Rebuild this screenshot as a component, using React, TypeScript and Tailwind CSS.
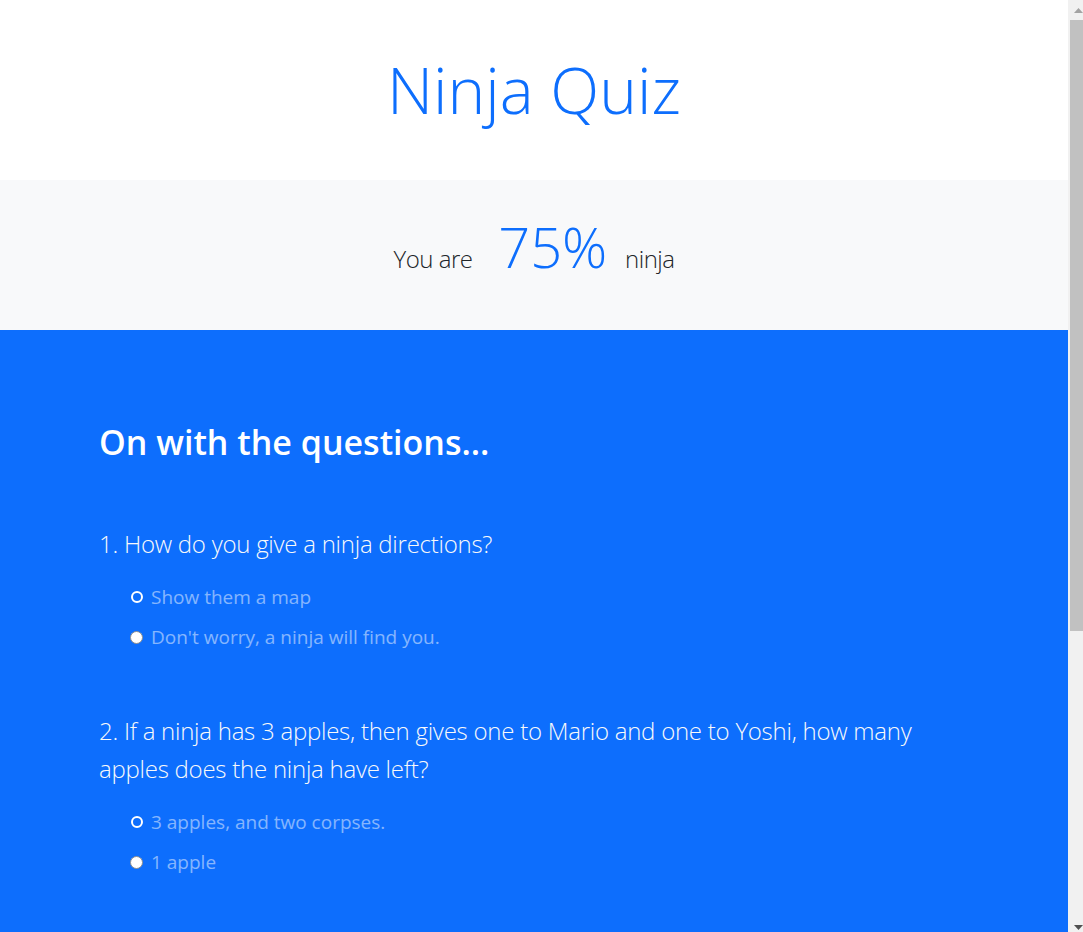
const questions = [
  {
    q: "1. How do you give a ninja directions?",
    a: ["Show them a map", "Don't worry, a ninja will find you."],
  },
  {
    q: "2. If a ninja has 3 apples, then gives one to Mario and one to Yoshi, how many apples does the ninja have left?",
    a: ["3 apples, and two corpses.", "1 apple"],
  },
];

function Radio({ checked }: { checked: boolean }) {
  if (checked) {
    return (
      <span className="w-[12px] h-[12px] mx-[0.5px] rounded-full border-2 border-white bg-[#0d6efd] shrink-0" />
    );
  }
  return (
    <span className="w-[13px] h-[13px] rounded-full border border-[#8f8f8f] bg-white shrink-0" />
  );
}

// fake window scrollbar, the page in the picture is scrolled to the top
function Scrollbar() {
  return (
    <aside className="w-[15px] shrink-0 bg-[#f1f1f1] flex flex-col">
      <div className="h-[20px] flex items-center justify-center pl-[5px]">
        <svg width="9" height="5" viewBox="0 0 9 5">
          <path d="M4.5 0 L9 5 L0 5 Z" fill="#a3a3a3" />
        </svg>
      </div>
      <div className="h-[611px] ml-[2px] bg-[#c1c1c1]" />
      <div className="flex-1 flex items-end justify-center pl-[5px] pb-[2px]">
        <svg width="9" height="5" viewBox="0 0 9 5">
          <path d="M0 0 L9 0 L4.5 5 Z" fill="#505050" />
        </svg>
      </div>
    </aside>
  );
}

export default function App() {
  return (
    <div className="h-[932px] overflow-hidden flex font-['Open_Sans',sans-serif] text-[19px]">
      <div className="flex-1 flex flex-col">
        <header className="bg-white h-[180px] shrink-0 flex items-center justify-center">
          <h1 className="text-[#0d6efd] text-[64px] font-light leading-[1.2]">
            Ninja Quiz
          </h1>
        </header>

        <section className="bg-[#f8f9fa] h-[150px] shrink-0 flex items-center justify-center text-[#212529]">
          <p className="text-[24px] font-light tracking-[-0.5px] mb-[16px]">
            You are{" "}
            <span className="text-[#0d6efd] text-[56px] leading-[1.2] pl-[20px] pr-[12px] tracking-normal">
              75%
            </span>{" "}
            ninja
          </p>
        </section>

        <main className="flex-1 bg-[#0d6efd] pt-[90px]">
          <div className="w-[870px] mx-auto">
            <h2 className="text-white text-[34px] font-semibold leading-[44px] mb-[61px]">
              On with the questions...
            </h2>

            <form className="flex flex-col gap-[60px] text-[#f8f9fa]">
              {questions.map((item, i) => (
                <div key={i}>
                  <p className="text-[24px] font-light tracking-[-0.25px] leading-[38px] mb-[19px]">
                    {item.q}
                  </p>
                  <div className="flex flex-col gap-[10px] pl-[31px]">
                    {item.a.map((ans, j) => (
                      <label
                        key={j}
                        className="h-[30px] flex items-center gap-[8px] text-white/50"
                      >
                        <Radio checked={j === 0} />
                        <span>{ans}</span>
                      </label>
                    ))}
                  </div>
                </div>
              ))}
            </form>
          </div>
        </main>
      </div>
      <Scrollbar />
    </div>
  );
}
